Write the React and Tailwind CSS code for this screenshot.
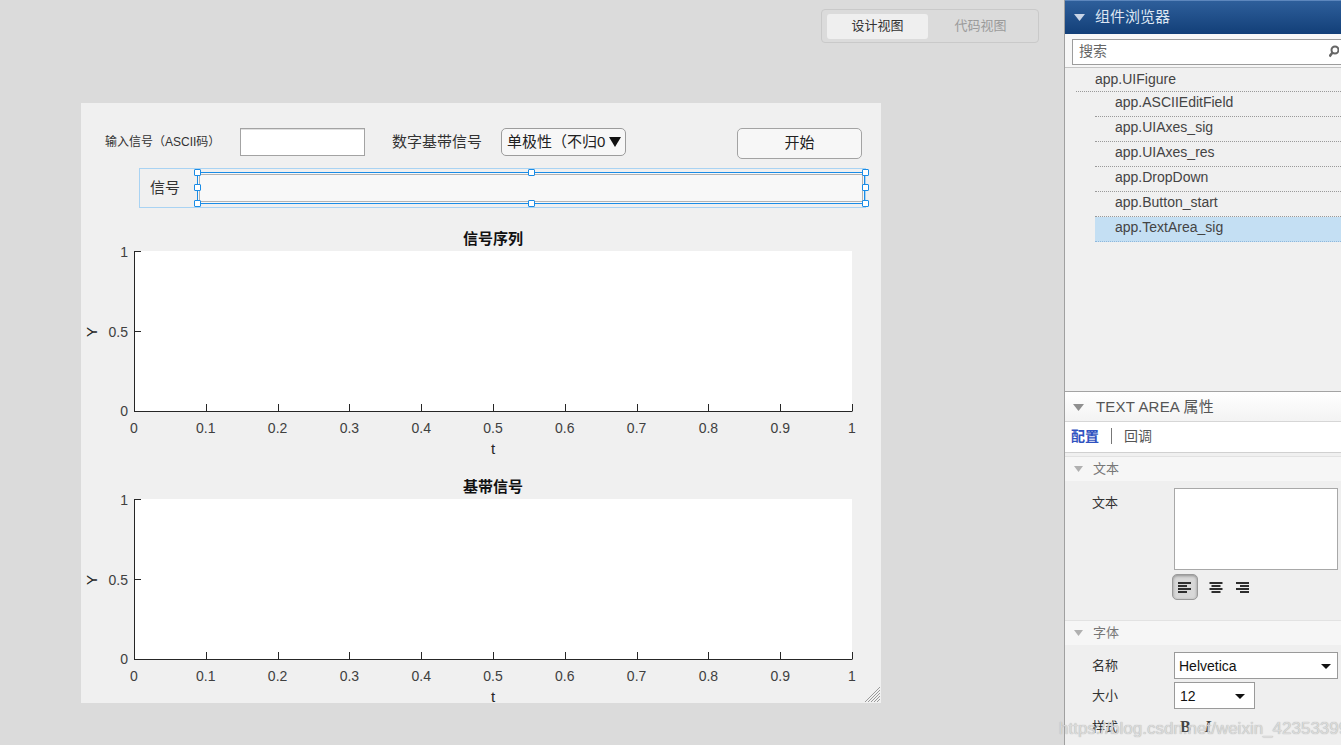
import React from "react";

const ticksX = [0, 0.1, 0.2, 0.3, 0.4, 0.5, 0.6, 0.7, 0.8, 0.9, 1];
const tickLabel = (v) => (v === 0 ? "0" : v === 1 ? "1" : String(v));

function Axes({ title, className }) {
  const L = 53, R = 771, T = 28, B = 188;
  const W = R - L;
  return (
    <svg className={className} width="800" height="236" viewBox="0 0 800 236">
      <rect x={L} y={T} width={W} height={B - T} fill="#ffffff" />
      <text x={(L + R) / 2} y={15} textAnchor="middle" dominantBaseline="central" fontSize="15" fontWeight="bold" fill="#111" fontFamily="'Liberation Sans','Noto Sans CJK SC',sans-serif">{title}</text>
      <line x1={L + 0.5} y1={T} x2={L + 0.5} y2={B + 0.5} stroke="#262626" strokeWidth="1" />
      <line x1={L} y1={B + 0.5} x2={R + 0.5} y2={B + 0.5} stroke="#262626" strokeWidth="1" />
      {[T, (T + B) / 2, B].map((y, i) => (
        <line key={i} x1={L} y1={y + 0.5} x2={L + 7} y2={y + 0.5} stroke="#262626" strokeWidth="1" />
      ))}
      {ticksX.map((v, i) => {
        const x = Math.round(L + W * v) + 0.5;
        return <line key={i} x1={x} y1={B} x2={x} y2={B - 7} stroke="#262626" strokeWidth="1" />;
      })}
      {[["1", T + 1], ["0.5", (T + B) / 2 + 1], ["0", B]].map(([s, y], i) => (
        <text key={i} x={L - 6} y={y} textAnchor="end" dominantBaseline="central" fontSize="14" fill="#404040" fontFamily="'Liberation Sans',sans-serif">{s}</text>
      ))}
      {ticksX.map((v, i) => (
        <text key={i} x={L + W * v} y={205} textAnchor="middle" dominantBaseline="central" fontSize="14" fill="#404040" fontFamily="'Liberation Sans',sans-serif">{tickLabel(v)}</text>
      ))}
      <text x={(L + R) / 2} y={225} textAnchor="middle" dominantBaseline="central" fontSize="15" fill="#262626" fontFamily="'Liberation Sans',sans-serif">t</text>
      <text x={0} y={0} transform={`translate(10 ${(T + B) / 2 + 1}) rotate(-90)`} textAnchor="middle" dominantBaseline="central" fontSize="15" fill="#262626" fontFamily="'Liberation Sans',sans-serif">Y</text>
    </svg>
  );
}

function Handle({ className }) {
  return <div className={"absolute w-[7px] h-[7px] bg-white border border-[#1a8ce6] rounded-[1px] " + className} />;
}

function Tri({ color = "#8a8a8a", size = "w-[10px] h-[7px]" }) {
  return (
    <svg className={size} viewBox="0 0 10 7" preserveAspectRatio="none">
      <path d="M0 0 L10 0 L5 7 Z" fill={color} />
    </svg>
  );
}

function AlignIcon({ kind }) {
  const rows = [13, 9, 13, 9];
  return (
    <svg width="16" height="13" viewBox="0 0 16 13">
      {rows.map((w, i) => {
        let x = 1;
        if (kind === "center") x = (16 - w) / 2;
        if (kind === "right") x = 15 - w;
        return <rect key={i} x={x} y={1 + i * 3} width={w} height="2" fill="#2e2e2e" />;
      })}
    </svg>
  );
}

const treeChildren = [
  "app.ASCIIEditField",
  "app.UIAxes_sig",
  "app.UIAxes_res",
  "app.DropDown",
  "app.Button_start",
  "app.TextArea_sig",
];

export default function App() {
  return (
    <div className="w-[1341px] h-[745px] overflow-hidden flex bg-[#dbdbdb] font-['Liberation_Sans','Noto_Sans_CJK_SC',sans-serif] text-[#333]">
      {/* Left design area */}
      <div className="w-[1064px] flex flex-col">
        <div className="flex justify-end pr-[25px] pt-[9px]">
          <div className="w-[218px] h-[34px] rounded-[4px] border border-[#c9c9c9] flex items-center px-[5px]">
            <div className="w-[101px] h-[25px] rounded-[3px] bg-[#efefef] flex items-center justify-center text-[13px] text-[#333]">设计视图</div>
            <div className="flex-1 text-center text-[13px] text-[#9a9a9a]">代码视图</div>
          </div>
        </div>

        {/* Canvas */}
        <div className="relative ml-[81px] mt-[60px] w-[800px] h-[600px] bg-[#f0f0f0] overflow-hidden">
          <div className="absolute left-[24px] top-[30px] h-[18px] flex items-center text-[12px] text-[#333]">输入信号（ASCII码）</div>
          <div className="absolute left-[159px] top-[25px] w-[125px] h-[28px] bg-white border border-[#a3a3a3] shadow-[inset_0_1px_0_#e0e0e0]" />

          <div className="absolute left-[311px] top-[29px] h-[20px] flex items-center text-[15px] text-[#333]">数字基带信号</div>
          <div className="absolute left-[420px] top-[25px] w-[125px] h-[28px] rounded-[5px] border border-[#9c9c9c] bg-[#f7f7f7] flex items-center pl-[5px] text-[15px] text-[#222] whitespace-nowrap">
            单极性（不归0
            <span className="ml-[4px]"><Tri color="#111" size="w-[12px] h-[10px] block" /></span>
          </div>

          <div className="absolute left-[656px] top-[25px] w-[125px] h-[31px] rounded-[5px] border border-[#a3a3a3] bg-[#f7f7f7] flex items-center justify-center text-[15px] text-[#222]">开始</div>

          {/* Text area with label, selected */}
          <div className="absolute left-[58px] top-[65px] w-[727px] h-[40px] border border-[#a9d3f3]">
            <div className="absolute left-[10px] top-0 h-[38px] flex items-center text-[15px] text-[#333]">信号</div>
            <div className="absolute left-[57px] top-[3px] w-[668px] h-[32px] bg-[#f8f8f8] border border-[#1a8ce6] p-px">
              <div className="w-full h-full border border-[#b3b3b3]" />
            </div>
            <Handle className="left-[54px] top-[0px]" />
            <Handle className="left-[388px] top-[0px]" />
            <Handle className="left-[722px] top-[0px]" />
            <Handle className="left-[54px] top-[15px]" />
            <Handle className="left-[722px] top-[15px]" />
            <Handle className="left-[54px] top-[31px]" />
            <Handle className="left-[388px] top-[31px]" />
            <Handle className="left-[722px] top-[31px]" />
          </div>

          <Axes title="信号序列" className="absolute left-0 top-[120px]" />
          <Axes title="基带信号" className="absolute left-0 top-[368px]" />

          <svg className="absolute left-[781px] top-[581px]" width="18" height="18" viewBox="0 0 18 18">
            {[3, 6, 9, 12, 15].map((k) => (
              <line key={k} x1={18} y1={k} x2={k} y2={18} stroke="#9a9a9a" strokeWidth="1" />
            ))}
          </svg>
        </div>
      </div>

      {/* Right panel */}
      <div className="relative w-[277px] h-[745px] border-l border-[#a0a0a0] bg-[#f0f0f0] flex flex-col">
        {/* Component browser */}
        <div className="h-[34px] bg-gradient-to-b from-[#2e5f9b] to-[#123f78] border-t border-[#5d87bd] flex items-center pl-[9px] gap-[10px]">
          <Tri color="#c8d4e6" size="w-[11px] h-[7px]" />
          <span className="text-[15px] text-[#dde6f2]">组件浏览器</span>
        </div>
        <div className="h-[34px] bg-[#f7f7f7] flex items-center pl-[7px] pt-[2px] border-b border-[#c4c4c4]">
          <div className="flex-1 h-[26px] bg-white border border-[#9c9c9c] border-r-0 flex items-center px-[6px] text-[14px] text-[#666]">
            <span className="flex-1">搜索</span>
            <svg width="10" height="14" viewBox="0 0 10 14" className="mr-[-4px]">
              <circle cx="6" cy="5" r="3.5" fill="none" stroke="#666" strokeWidth="2" />
              <line x1="3.5" y1="7.5" x2="0.5" y2="11.5" stroke="#666" strokeWidth="2.5" />
            </svg>
          </div>
        </div>
        <div>
          <div className="pl-[30px] h-[23px] flex items-center text-[14px] text-[#444]">app.UIFigure</div>
          <div className="ml-[11px] border-t border-dotted border-[#9a9a9a]" />
          <div className="ml-[30px]">
            {treeChildren.map((c) => (
              <div
                key={c}
                className={
                  "h-[25px] pl-[20px] pb-[4px] flex items-center text-[14px] text-[#444] border-b border-dotted " +
                  (c === "app.TextArea_sig" ? "bg-[#c4dff3] border-[#8fb8dc]" : "border-[#9a9a9a]")
                }
              >
                {c}
              </div>
            ))}
          </div>
        </div>
        <div className="flex-1" />

        {/* Properties */}
        <div className="h-[354px] border-t border-[#a3a3a3] flex flex-col">
          <div className="h-[30px] bg-gradient-to-b from-[#ffffff] to-[#f3f3f3] border-b border-[#d6d6d6] flex items-center pl-[8px] pt-[2px] gap-[12px]">
            <Tri color="#8f8f8f" size="w-[11px] h-[7px]" />
            <span className="text-[15px] text-[#555] tracking-[0.2px]">TEXT AREA 属性</span>
          </div>
          <div className="h-[31px] bg-white flex items-center pl-[6px] pb-[2px] text-[14px] border-b border-[#d0d0d0]">
            <span className="text-[#3052c0] font-semibold">配置</span>
            <span className="mx-[12px] w-px h-[16px] bg-[#777]" />
            <span className="text-[#555]">回调</span>
          </div>
          <div className="h-[3px] bg-[#f0f0f0]" />
          <div className="h-[25px] bg-[#f6f6f6] border-t border-[#e2e2e2] flex items-center pl-[9px] gap-[10px]">
            <Tri color="#b0b0b0" size="w-[9px] h-[6px]" />
            <span className="text-[13px] text-[#777]">文本</span>
          </div>
          <div className="h-[139px] bg-[#efefef] flex pl-[27px] pt-[7px]">
            <span className="w-[82px] text-[13px] text-[#333] pt-[5px]">文本</span>
            <div className="flex flex-col">
              <div className="w-[164px] h-[82px] bg-white border border-[#a8a8a8]" />
              <div className="flex items-center mt-[4px] gap-[10px] -ml-[2px]">
                <div className="w-[26px] h-[26px] rounded-[5px] bg-[#d8d8d8] border border-[#9a9a9a] shadow-[inset_0_1px_3px_rgba(0,0,0,0.35)] flex items-center justify-center">
                  <AlignIcon kind="left" />
                </div>
                <AlignIcon kind="center" />
                <AlignIcon kind="right" />
              </div>
            </div>
          </div>
          <div className="h-[25px] bg-[#f6f6f6] border-t border-[#e2e2e2] flex items-center pl-[9px] gap-[10px]">
            <Tri color="#b0b0b0" size="w-[9px] h-[6px]" />
            <span className="text-[13px] text-[#777]">字体</span>
          </div>
          <div className="flex-1 bg-[#efefef] pl-[27px] pt-[7px] flex flex-col gap-[3px]">
            <div className="flex items-center">
              <span className="w-[82px] text-[13px] text-[#333]">名称</span>
              <div className="w-[164px] h-[27px] bg-white border border-[#9a9a9a] flex items-center pl-[4px] pr-[6px] pt-[2px] text-[14px] text-[#111]">
                <span className="flex-1">Helvetica</span>
                <Tri color="#111" size="w-[10px] h-[5px]" />
              </div>
            </div>
            <div className="flex items-center">
              <span className="w-[82px] text-[13px] text-[#333]">大小</span>
              <div className="w-[81px] h-[27px] bg-white border border-[#9a9a9a] flex items-center pl-[5px] pr-[9px] pt-[2px] text-[14px] text-[#111]">
                <span className="flex-1">12</span>
                <Tri color="#111" size="w-[10px] h-[5px]" />
              </div>
            </div>
            <div className="flex items-center h-[30px]">
              <span className="w-[88px] text-[13px] text-[#333]">样式</span>
              <span className="text-[16px] font-bold font-['Liberation_Serif',serif] text-[#444]">B</span>
              <span className="ml-[14px] text-[16px] italic font-bold font-['Liberation_Serif',serif] text-[#444]">I</span>
            </div>
          </div>
        </div>

        {/* watermark */}
        <div className="absolute left-[-6px] top-[716px] text-[17px] text-[#d9d9d9] opacity-90 whitespace-nowrap [text-shadow:0_0_1px_#9a9a9a] pointer-events-none">
          https://blog.csdn.net/weixin_42353399
        </div>
      </div>
    </div>
  );
}
